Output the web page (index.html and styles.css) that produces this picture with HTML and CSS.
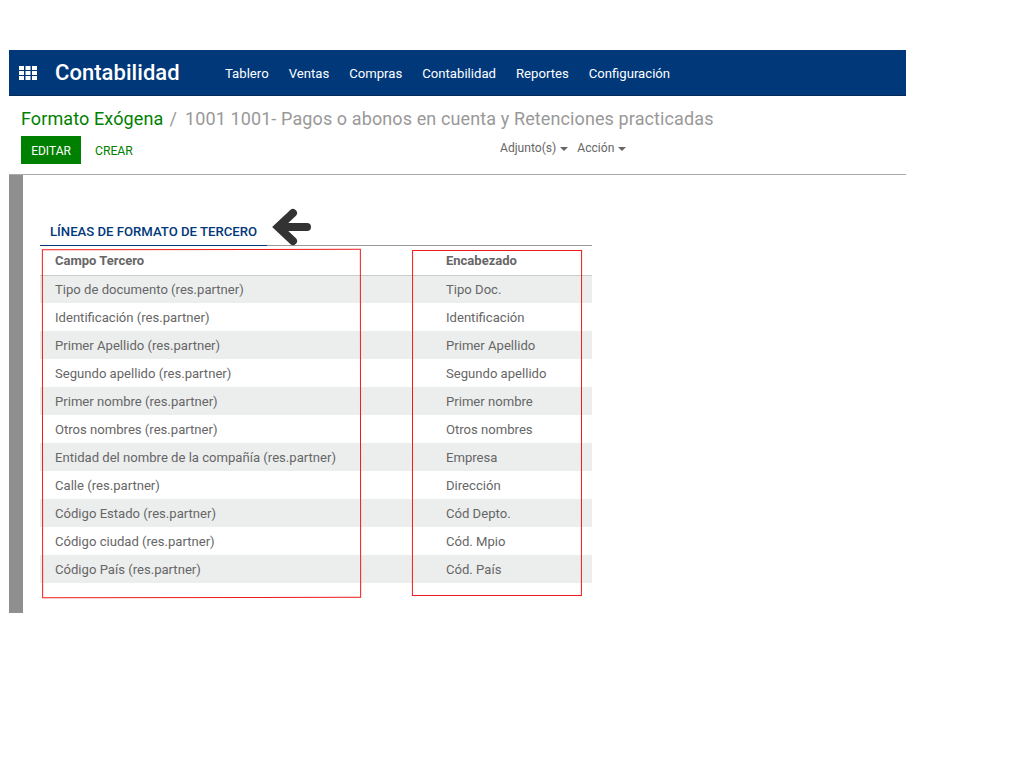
FILE: index.html
```html
<!DOCTYPE html>
<html lang="es">
<head>
<meta charset="utf-8">
<title>Contabilidad</title>
<link rel="stylesheet" href="styles.css">
</head>
<body>
<div class="app">
  <nav class="navbar">
    <svg class="apps" width="18" height="14" viewBox="0 0 18 14"><g fill="#fff"><rect x="0" y="0" width="5" height="4"/><rect x="6.500" y="0" width="5" height="4"/><rect x="13" y="0" width="5" height="4"/><rect x="0" y="5" width="5" height="4"/><rect x="6.500" y="5" width="5" height="4"/><rect x="13" y="5" width="5" height="4"/><rect x="0" y="10" width="5" height="4"/><rect x="6.500" y="10" width="5" height="4"/><rect x="13" y="10" width="5" height="4"/></g></svg>
    <span class="brand">Contabilidad</span>
    <ul class="menu">
      <li>Tablero</li><li>Ventas</li><li>Compras</li><li>Contabilidad</li><li>Reportes</li><li>Configuración</li>
    </ul>
  </nav>
  <header class="control">
    <h1 class="crumbs"><a class="crumb-link">Formato Exógena</a><span class="crumb-sep">/</span><span class="crumb-cur">1001 1001- Pagos o abonos en cuenta y Retenciones practicadas</span></h1>
    <div class="actions">
      <div class="buttons"><button class="btn-primary">EDITAR</button><button class="btn-link">CREAR</button></div>
      <div class="dropdowns"><span class="dd">Adjunto(s)<i class="caret"></i></span><span class="dd">Acción<i class="caret"></i></span></div>
    </div>
  </header>
  <main class="content">
    <div class="tabs"><span class="tab">LÍNEAS DE FORMATO DE TERCERO</span></div>
    <table class="grid">
      <thead><tr><th class="c1">Campo Tercero</th><th>Encabezado</th></tr></thead>
      <tbody>
        <tr><td>Tipo de documento (res.partner)</td><td>Tipo Doc.</td></tr>
        <tr><td>Identificación (res.partner)</td><td>Identificación</td></tr>
        <tr><td>Primer Apellido (res.partner)</td><td>Primer Apellido</td></tr>
        <tr><td>Segundo apellido (res.partner)</td><td>Segundo apellido</td></tr>
        <tr><td>Primer nombre (res.partner)</td><td>Primer nombre</td></tr>
        <tr><td>Otros nombres (res.partner)</td><td>Otros nombres</td></tr>
        <tr><td>Entidad del nombre de la compañía (res.partner)</td><td>Empresa</td></tr>
        <tr><td>Calle (res.partner)</td><td>Dirección</td></tr>
        <tr><td>Código Estado (res.partner)</td><td>Cód Depto.</td></tr>
        <tr><td>Código ciudad (res.partner)</td><td>Cód. Mpio</td></tr>
        <tr><td>Código País (res.partner)</td><td>Cód. País</td></tr>
      </tbody>
    </table>
    <svg class="arrow" width="40" height="40" viewBox="0 0 40 40"><path d="M21 5 L6 19 L21 33 M7 19 H35" fill="none" stroke="#333" stroke-width="8" stroke-linecap="round" stroke-linejoin="miter"/></svg>
    <div class="mark mark-a"></div>
    <div class="mark mark-b"></div>
  </main>
</div>
</body>
</html>
```
FILE: styles.css
```css
* { box-sizing: border-box; }
html, body { margin: 0; padding: 0; background: #fff; }
body { font-family: Roboto, "Noto Sans", sans-serif; font-size: 13px; color: #666; padding: 50px 0 0 9px; }
.app { width: 897px; }
.navbar { height: 46px; background: #00387a; border-bottom: 1px solid #002a5c; display: flex; align-items: center; padding-left: 10px; color: #fff; }
.apps { flex: none; }
.brand { font-size: 22px; font-weight: 500; letter-spacing: .05px; margin-left: 18px; width: 170px; line-height: 48px; }
.menu { list-style: none; display: flex; gap: 20px; margin: 0; padding: 2px 0 0; font-size: 13.15px; }
.control { height: 79px; border-bottom: 1px solid #a9a9a9; padding: 12px 0 0 12px; }
.crumbs { margin: 0; font-size: 18px; font-weight: 400; line-height: 22px; letter-spacing: .11px; display: flex; }
.crumb-link { color: #008000; }
.crumb-sep { color: #999; margin: 0 8px 0 6px; }
.crumb-cur { color: #999; }
.actions { display: flex; margin-top: 6px; }
.buttons { display: flex; width: 479px; }
.btn-primary { width: 60px; height: 28px; border: 0; background: #008000; color: #fff; font: 12px Roboto, sans-serif; padding: 2px 0 0; }
.btn-link { border: 0; background: none; color: #008000; font: 12.2px Roboto, sans-serif; padding: 2px 0 0 14px; }
.dropdowns { display: flex; gap: 9px; height: 24px; align-items: center; font-size: 12.1px; color: #666; }
.caret { display: inline-block; width: 0; height: 0; margin-left: 4px; border: 4px solid transparent; border-top-color: #666; border-bottom: 0; vertical-align: middle; }
.content { position: relative; height: 438px; border-left: 14px solid #8f8f8f; padding: 47px 0 0 17px; }
.tabs { width: 552px; height: 24px; border-bottom: 1px solid #999; }
.tab { display: block; width: 227px; height: 24px; border-bottom: 1px solid #00387a; padding-left: 10px; color: #00387a; font-size: 13.15px; font-weight: 500; line-height: 20px; }
.grid { width: 552px; border-collapse: collapse; table-layout: fixed; }
.grid th { height: 29px; text-align: left; font-weight: 700; padding: 0 0 0 15px; color: #666; border-bottom: 1px solid #ccc; font-size: 13px; }
.grid .c1 { width: 391px; }
.grid td { height: 28px; padding: 0 0 0 15px; color: #666; font-size: 13.1px; }
.grid tbody tr:nth-child(odd) { background: #eceeee; }
.arrow { position: absolute; left: 249px; top: 33px; }
.mark { position: absolute; border: 1px solid #f01a1a; }
.mark-a { left: 19px; top: 74px; width: 319px; height: 349px; transform: rotate(-.05deg); }
.mark-b { left: 389px; top: 75px; width: 170px; height: 346px; transform: rotate(.03deg); }
```
